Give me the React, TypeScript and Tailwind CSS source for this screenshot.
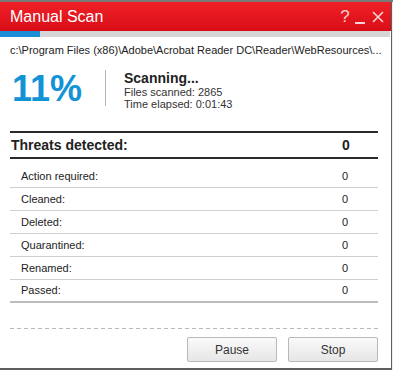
import React from 'react';

const rows = [
  { label: 'Action required:', value: 0 },
  { label: 'Cleaned:', value: 0 },
  { label: 'Deleted:', value: 0 },
  { label: 'Quarantined:', value: 0 },
  { label: 'Renamed:', value: 0 },
  { label: 'Passed:', value: 0 },
];

export default function App() {
  return (
    <div className="w-[393px] h-[370px] overflow-hidden bg-[#ececec] font-['Liberation_Sans',Arial,sans-serif]">
      <div className="h-[2px] bg-[#7a7a7a]" />
      <div className="w-[392px] h-[368px] bg-white border-r border-b-2 border-[#5f5f5f] flex flex-col">
        {/* title bar */}
        <div className="h-[29px] flex items-center bg-gradient-to-b from-[#ef1f27] to-[#d90d17] pl-[10px] pr-[7px]">
          <span className="text-white text-[16px] leading-[18px]">Manual Scan</span>
          <div className="ml-auto flex items-center text-[#fbd3d3]">
            <span className="text-[17px] leading-[18px] w-[10px] text-center">?</span>
            <div className="w-[10px] h-[2px] bg-[#fbd3d3] mt-[12px] ml-[5px]" />
            <svg width="12" height="12" viewBox="0 0 12 12" className="ml-[7px]">
              <path d="M1 1 L11 11 M11 1 L1 11" stroke="#fbd3d3" strokeWidth="1.6" />
            </svg>
          </div>
        </div>

        {/* progress */}
        <div className="h-[6px] bg-[#d5d5d5] mr-px">
          <div className="h-full w-[40px] bg-[#1b8fd6]" />
        </div>

        <div className="pl-[10px] pr-[13px] flex flex-col">
          <div className="mt-[7px] text-[11px] leading-[13px] text-[#222] whitespace-nowrap">
            c:\Program Files (x86)\Adobe\Acrobat Reader DC\Reader\WebResources\...
          </div>

          <div className="mt-[13px] flex items-start">
            <div className="w-[95px] pl-[2px] text-[36px] leading-[38px] font-bold text-[#1293d6]">11%</div>
            <div className="w-px h-[36px] bg-[#b5b5b5]" />
            <div className="ml-[18px] text-[#222]">
              <div className="text-[14px] leading-[16px] font-bold">Scanning...</div>
              <div className="text-[11px] leading-[12px] text-[#333]">Files scanned: 2865</div>
              <div className="text-[11px] leading-[12px] text-[#333]">Time elapsed: 0:01:43</div>
            </div>
          </div>

          <div className="mt-[21px] border-t-2 border-b-2 border-[#2a2a2a] h-[28px] flex items-center text-[14px] font-bold text-[#222]">
            <span className="pl-px flex-1">Threats detected:</span>
            <span className="w-[36px]">0</span>
          </div>

          <div className="pt-[6px] flex flex-col">
            {rows.map((r, i) => (
              <div
                key={r.label}
                className={
                  i === rows.length - 1
                    ? 'h-[23px] flex items-center border-b-2 border-[#bdbdbd] text-[11px] text-[#222]'
                    : 'h-[23px] flex items-center border-b border-[#cfcfcf] text-[11px] text-[#222]'
                }
              >
                <span className="pl-[11px] flex-1">{r.label}</span>
                <span className="w-[36px]">{r.value}</span>
              </div>
            ))}
          </div>

          <div className="mt-[25px] h-px bg-[repeating-linear-gradient(to_right,#b9b9b9_0_4px,transparent_4px_7px)]" />

          <div className="mt-[8px] flex justify-end gap-[11px]">
            <button className="w-[90px] h-[25px] rounded-[2px] border border-[#b8b8b8] bg-gradient-to-b from-[#fafafa] to-[#e6e6e6] text-[12px] text-[#333]">
              Pause
            </button>
            <button className="w-[90px] h-[25px] rounded-[2px] border border-[#b8b8b8] bg-gradient-to-b from-[#fafafa] to-[#e6e6e6] text-[12px] text-[#333]">
              Stop
            </button>
          </div>
        </div>
      </div>
    </div>
  );
}
